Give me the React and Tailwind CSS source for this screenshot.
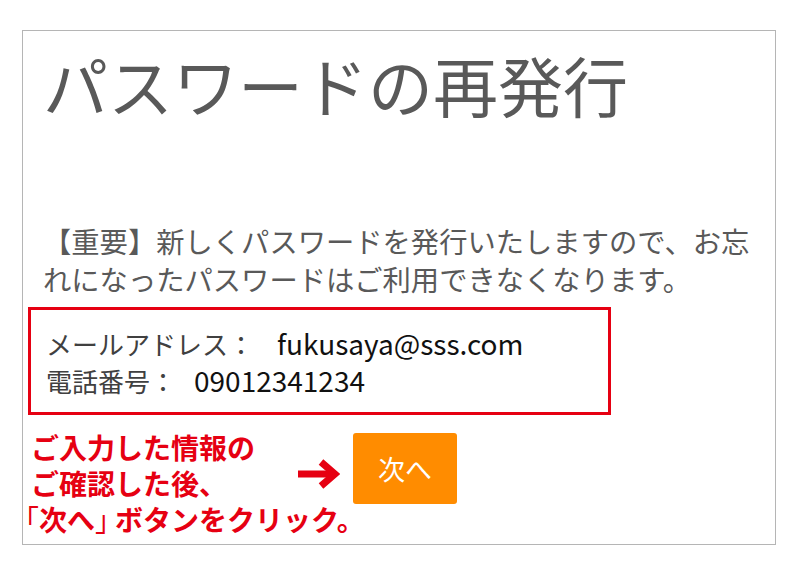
import React from 'react';

const jp = { fontFamily: '"Noto Sans CJK JP", "Noto Sans", sans-serif' };

const ArrowRight = () => (
  <svg width="42" height="30" viewBox="0 0 42 30" className="mt-[30px] shrink-0">
    <path d="M0 15 H35" stroke="#e60012" strokeWidth="7" fill="none" />
    <path d="M23 3 L37 15 L23 27" stroke="#e60012" strokeWidth="7" fill="none" strokeLinejoin="miter" />
  </svg>
);

export default function App() {
  return (
    <div className="min-h-[576px] bg-white pt-[30px] pl-[22px]" style={jp}>
      <div className="w-[754px] border border-[#b5b5b5] px-[20px] pt-[21px] pb-[7px]">
        <h1 className="text-[65px] leading-[64px] font-normal text-[#595959]">
          パスワードの再発行
        </h1>

        <p className="mt-[106px] text-[28.3px] leading-[38px] text-[#595959]">
          【重要】新しくパスワードを発行いたしますので、お忘れになったパスワードはご利用できなくなります。
        </p>

        {/* 入力内容の確認 */}
        <div className="mt-[9px] -ml-[15px] w-[583px] border-[3px] border-[#e60012] pl-[15px] pt-[15px] pb-[13px] text-[26px] leading-[37px]">
          <div className="flex items-baseline">
            <span className="text-[#404040]">メールアドレス：</span>
            <span className="ml-[23px] text-[28px] text-[#111]">fukusaya@sss.com</span>
          </div>
          <div className="flex items-baseline">
            <span className="text-[#404040]">電話番号：</span>
            <span className="ml-[18px] text-[28px] text-[#111]">09012341234</span>
          </div>
        </div>

        {/* 注記と次へボタン */}
        <div className="mt-[14px] -ml-[12px] text-[#e60012] font-bold text-[28px] leading-[36px]">
          <div className="flex items-start">
            <p className="w-[267px] shrink-0">
              ご入力した情報の
              <br />
              ご確認した後、
            </p>
            <ArrowRight />
            <button className="mt-[4px] -mb-[3px] ml-[13px] w-[104px] h-[71px] rounded-[3px] bg-[#ff8c00] text-white font-normal text-[27px] leading-none">
              次へ
            </button>
          </div>
          <p className="-ml-[20px] whitespace-nowrap">
            <span className="font-normal">「</span>次へ<span className="font-normal -mr-[8px]">」</span>ボタンをクリック。
          </p>
        </div>
      </div>
    </div>
  );
}
